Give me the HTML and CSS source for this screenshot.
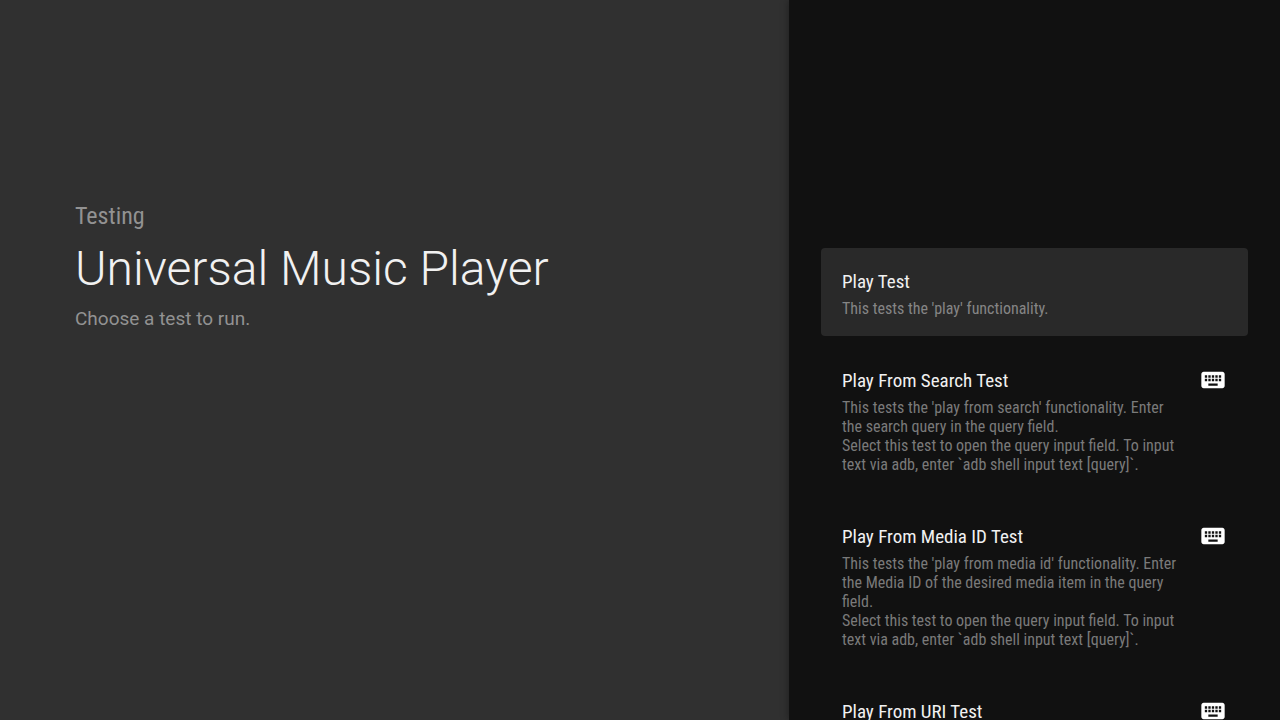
FILE: index.html
```html
<!DOCTYPE html>
<html lang="en">
<head>
<meta charset="utf-8">
<title>Universal Music Player</title>
<link rel="stylesheet" href="styles.css">
</head>
<body>
<svg class="defs" aria-hidden="true">
  <symbol id="keyboard" viewBox="0 0 24 24"><path d="M20 5H4c-1.100 0-1.990.9-1.990 2L2 17c0 1.100.9 2 2 2h16c1.100 0 2-.9 2-2V7c0-1.100-.9-2-2-2zm-9 3h2v2h-2V8zm0 3h2v2h-2v-2zM8 8h2v2H8V8zm0 3h2v2H8v-2zm-1 2H5v-2h2v2zm0-3H5V8h2v2zm9 7H8v-2h8v2zm0-4h-2v-2h2v2zm0-3h-2V8h2v2zm3 3h-2v-2h2v2zm0-3h-2V8h2v2z"/></symbol>
</svg>
<div class="screen">
  <main class="guidance">
    <p class="breadcrumb">Testing</p>
    <h1 class="title">Universal Music Player</h1>
    <p class="description">Choose a test to run.</p>
  </main>
  <nav class="actions" aria-label="Tests">
    <button class="action selected" type="button">
      <span class="content">
        <span class="name">Play Test</span>
        <span class="detail">This tests the 'play' functionality.</span>
      </span>
    </button>
    <button class="action" type="button">
      <span class="content">
        <span class="name">Play From Search Test</span>
        <span class="detail">This tests the 'play from search' functionality. Enter the search query in the query field.<br>Select this test to open the query input field. To input text via adb, enter `adb shell input text [query]`.</span>
      </span>
      <svg class="icon" aria-hidden="true"><use href="#keyboard"/></svg>
    </button>
    <button class="action" type="button">
      <span class="content">
        <span class="name">Play From Media ID Test</span>
        <span class="detail">This tests the 'play from media id' functionality. Enter the Media ID of the desired media item in the query field.<br>Select this test to open the query input field. To input text via adb, enter `adb shell input text [query]`.</span>
      </span>
      <svg class="icon" aria-hidden="true"><use href="#keyboard"/></svg>
    </button>
    <button class="action" type="button">
      <span class="content">
        <span class="name">Play From URI Test</span>
      </span>
      <svg class="icon" aria-hidden="true"><use href="#keyboard"/></svg>
    </button>
  </nav>
</div>
</body>
</html>
```
FILE: styles.css
```css
* { box-sizing: border-box; }
body {
  margin: 0;
  background: #303030;
  color: #f1f1f1;
  font-family: Roboto, "Liberation Sans", sans-serif;
}
.defs { display: none; }
.screen {
  display: flex;
  height: 100vh;
  overflow: hidden;
}
.guidance {
  flex: 1;
  padding: 200px 32px 0 75px;
}
.breadcrumb, .title, .description { margin: 0; }
.breadcrumb {
  font-size: 24px;
  line-height: 32px;
  font-stretch: condensed;
  color: #929292;
}
.title {
  margin: 5px 0 4px;
  font-size: 48px;
  line-height: 64px;
  font-weight: 300;
}
.description {
  font-size: 19px;
  line-height: 28px;
  color: #929292;
}
.actions {
  width: 491px;
  padding: 248px 32px 0 32px;
  background: #111;
  box-shadow: 0 0 8px #0006;
}
.action {
  display: flex;
  width: 100%;
  margin: 0;
  padding: 19px 21px 18px;
  border: 0;
  border-radius: 4px;
  background: none;
  color: #f1f1f1;
  font-family: "Roboto Condensed", Roboto, sans-serif;
  font-stretch: condensed;
  text-align: left;
}
.action + .action { margin-top: 11px; }
.selected { background: #292929; }
.content {
  display: flex;
  flex: 1;
  flex-direction: column;
  gap: 2px;
}
.name { font-size: 19px; line-height: 30px; }
.detail { font-size: 16px; line-height: 19px; color: #7a7a7a; }
.selected .detail { color: #858585; }
.icon { width: 28px; height: 28px; margin-left: 20px; fill: #fff; }
```
